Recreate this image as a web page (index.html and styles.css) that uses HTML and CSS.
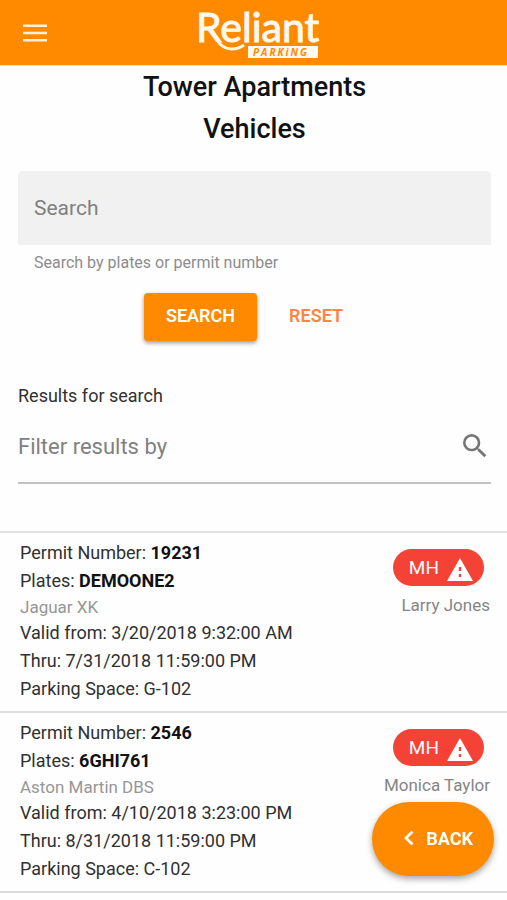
FILE: index.html
```html
<!DOCTYPE html>
<html lang="en">
<head>
<meta charset="utf-8">
<meta name="viewport" content="width=device-width, initial-scale=1">
<title>Tower Apartments Vehicles</title>
<link rel="stylesheet" href="styles.css">
</head>
<body>
<header class="bar">
  <button class="menu" type="button" aria-label="Menu">
    <svg width="26" height="18" viewBox="0 0 26 18"><path d="M1 1.8h24M1 9h24M1 16.2h24" stroke="#fff2dc" stroke-width="2.6"/></svg>
  </button>
  <a class="logo" href="#" aria-label="Reliant Parking">
    <svg width="124" height="64" viewBox="0 0 124 64">
      <text class="logo-name" x="-1" y="41">Reliant</text>
      <path d="M12 26C18 31 18 38 23 43C30 50 40 49 47 44" fill="none" stroke="#fff8ee" stroke-width="3"/>
      <path d="M51 45h70v12H51z" fill="#fff8ee"/>
      <text class="logo-tag" x="56" y="55">PARKiNG</text>
    </svg>
  </a>
</header>
<main>
  <h1 class="title">Tower Apartments<br>Vehicles</h1>
  <form class="search">
    <input class="search-box" id="q" type="text" placeholder="Search" aria-label="Search" aria-describedby="hint">
    <label class="hint" id="hint" for="q">Search by plates or permit number</label>
    <div class="actions">
      <button class="btn btn-main" type="button">SEARCH</button>
      <button class="btn" type="reset">RESET</button>
    </div>
  </form>
  <section class="filter">
    <label class="filter-label" for="f">Results for search</label>
    <div class="filter-row">
      <input class="filter-box" id="f" type="text" placeholder="Filter results by">
      <svg class="filter-icon" viewBox="0 0 24 24"><path fill="#757575" d="M15.500 14h-.79l-.28-.27A6.471 6.471 0 0 0 16 9.500 6.500 6.500 0 1 0 9.500 16c1.610 0 3.090-.59 4.230-1.570l.27.28v.79l5 4.990L20.490 19l-4.990-5zm-6 0C7.010 14 5 11.990 5 9.500S7.010 5 9.500 5 14 7.010 14 9.500 11.990 14 9.500 14z"/></svg>
    </div>
  </section>
  <ul class="list">
    <li class="item">
      <div class="info">
        <p>Permit Number: <b>19231</b></p>
        <p>Plates: <b>DEMOONE2</b></p>
        <p class="car">Jaguar XK</p>
        <p>Valid from: 3/20/2018 9:32:00 AM</p>
        <p>Thru: 7/31/2018 11:59:00 PM</p>
        <p>Parking Space: G-102</p>
      </div>
      <div class="side">
        <span class="chip">MH <svg class="warn" viewBox="0 0 26 23"><path fill="#fff" d="M13 0L26 23H0z"/><path fill="#f44336" d="M11.800 9h2.400v4h-2.400zM11.800 16h2.400v3h-2.400z"/></svg></span>
        <span class="owner">Larry Jones</span>
      </div>
    </li>
    <li class="item">
      <div class="info">
        <p>Permit Number: <b>2546</b></p>
        <p>Plates: <b>6GHI761</b></p>
        <p class="car">Aston Martin DBS</p>
        <p>Valid from: 4/10/2018 3:23:00 PM</p>
        <p>Thru: 8/31/2018 11:59:00 PM</p>
        <p>Parking Space: C-102</p>
      </div>
      <div class="side">
        <span class="chip">MH <svg class="warn" viewBox="0 0 26 23"><path fill="#fff" d="M13 0L26 23H0z"/><path fill="#f44336" d="M11.800 9h2.400v4h-2.400zM11.800 16h2.400v3h-2.400z"/></svg></span>
        <span class="owner">Monica Taylor</span>
      </div>
    </li>
  </ul>
</main>
<button class="back" type="button">
  <svg width="10" height="16" viewBox="0 0 10 16"><path d="M8.500 1.500L2 8l6.500 6.500" fill="none" stroke="#fff" stroke-width="2.800"/></svg>
  BACK
</button>
</body>
</html>
```
FILE: styles.css
```css
* { box-sizing: border-box; }

body {
  margin: 0;
  background: #fefefe;
  color: #303030;
  font-family: Roboto, "Liberation Sans", sans-serif;
  font-size: 18px;
}

button, input {
  border: 0;
  background: none;
  padding: 0;
  font-family: inherit;
}

.bar {
  display: grid;
  grid-template-columns: 1fr auto 1fr;
  align-items: center;
  height: 66px;
  padding: 0 20px;
  background: #ff8a00;
  border-bottom: 1px solid #ffdcae;
}

.menu { justify-self: start; padding: 0 2px; line-height: 0; }

.logo { line-height: 0; margin-left: 10px; }

.logo-name {
  font-family: Lato, sans-serif;
  font-size: 41px;
  fill: #fff8ee;
  stroke: #fff8ee;
  stroke-width: 1px;
}

.logo-tag {
  font-family: "Open Sans", sans-serif;
  font-size: 10px;
  font-weight: 700;
  font-style: italic;
  letter-spacing: 2px;
  fill: #ff8a00;
}

.title {
  margin: 0;
  padding-left: 2px;
  text-align: center;
  font-size: 27px;
  line-height: 42px;
  font-weight: 500;
  color: #111;
}

.search { padding: 21px 16px 0 18px; }

.search-box {
  display: block;
  width: 100%;
  height: 74px;
  padding: 0 16px;
  border-radius: 5px 5px 0 0;
  background: #f1f1f1;
  font-size: 21px;
}

.search-box::placeholder, .filter-box::placeholder { color: #808080; opacity: 1; }

.hint {
  display: block;
  padding: 8px 16px 0;
  font-size: 16px;
  line-height: 20px;
  color: #8c8c8c;
}

.actions {
  display: flex;
  justify-content: center;
  gap: 10px;
  margin-top: 20px;
}

.btn {
  height: 48px;
  padding: 0 22px 4px;
  border-radius: 4px;
  font-size: 18px;
  font-weight: 600;
  color: #ff8445;
}

.btn-main {
  background: #ff8a00;
  color: #fff;
  box-shadow: 0 2px 4px rgba(0, 0, 0, .4);
}

.filter { padding: 43px 16px 0 18px; }

.filter-label { display: block; line-height: 24px; }

.filter-row {
  display: flex;
  align-items: center;
  height: 76px;
  padding-top: 2px;
  border-bottom: 2px solid #c2c2c2;
}

.filter-box { flex: 1; min-width: 0; font-size: 22px; }

.filter-icon { width: 32px; height: 32px; }

.list {
  list-style: none;
  margin: 47px 0 0;
  padding: 0;
  border-top: 2px solid #e2e2e2;
}

.item {
  display: flex;
  justify-content: space-between;
  padding: 6px 17px 8px 20px;
  border-bottom: 2px solid #dcdcdc;
}

.item p { margin: 0; line-height: 28px; }

.item b { font-weight: 700; color: #111; }

.item .car { font-size: 17px; line-height: 24px; color: #969696; }

.side {
  display: flex;
  flex-direction: column;
  align-items: flex-end;
  padding-top: 10px;
}

.chip {
  display: flex;
  align-items: center;
  gap: 8px;
  height: 37px;
  margin-right: 6px;
  padding: 0 11px 0 16px;
  border-radius: 19px;
  background: #f44336;
  color: #fff;
  font-size: 19px;
}

.warn { width: 26px; height: 23px; margin-top: 3px; }

.owner { margin-top: 7px; font-size: 17px; line-height: 24px; color: #858585; }

.back {
  position: fixed;
  right: 13px;
  bottom: 24px;
  display: flex;
  align-items: center;
  gap: 12px;
  height: 74px;
  padding: 0 21px 2px 32px;
  border-radius: 37px;
  background: #ff8a00;
  color: #fff;
  font-size: 18px;
  font-weight: 700;
  box-shadow: 0 3px 6px rgba(0, 0, 0, .35);
}
```
